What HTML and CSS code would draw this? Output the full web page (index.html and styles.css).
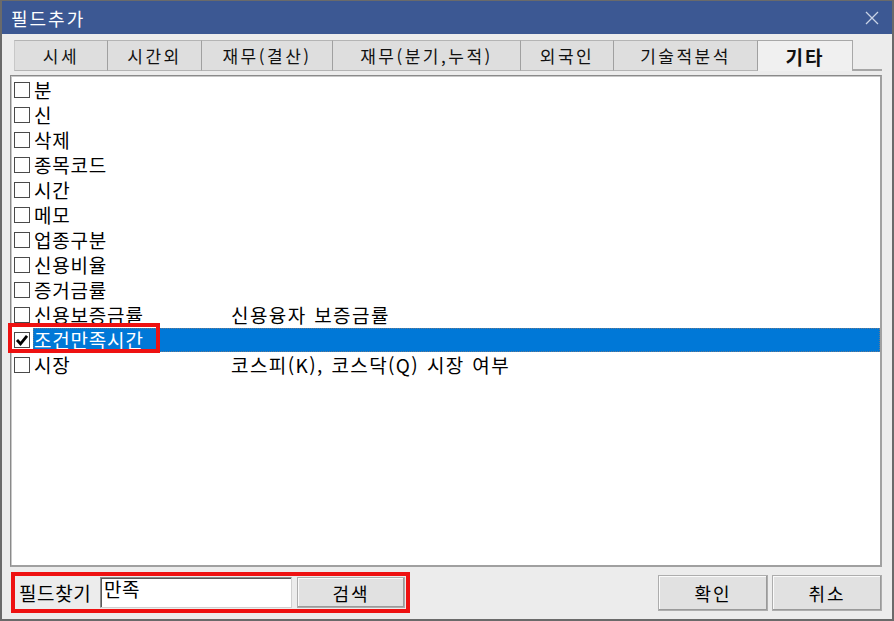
FILE: index.html
```html
<!DOCTYPE html>
<html lang="ko">
<head>
<meta charset="utf-8">
<link rel="stylesheet" href="styles.css">
</head>
<body>
<div class="window">
  <div class="titlebar">
    <span class="title">필드추가</span>
    <svg class="close" width="16" height="16" viewBox="0 0 16 16"><path d="M2 2 L14 14 M14 2 L2 14" stroke="#c9d3e6" stroke-width="1.3" fill="none"/></svg>
  </div>
  <div class="content">
    <div class="tabs">
      <div class="tab w1">시세</div>
      <div class="tab w2">시간외</div>
      <div class="tab w3">재무(결산)</div>
      <div class="tab w4">재무(분기,누적)</div>
      <div class="tab w5">외국인</div>
      <div class="tab w6">기술적분석</div>
      <div class="tab active w7">기타</div>
      <div class="tab-fill"></div>
    </div>
    <div class="list">
      <div class="row"><span class="cb"></span><span class="cell"><span class="name">분</span></span></div>
      <div class="row"><span class="cb"></span><span class="cell"><span class="name">신</span></span></div>
      <div class="row"><span class="cb"></span><span class="cell"><span class="name">삭제</span></span></div>
      <div class="row"><span class="cb"></span><span class="cell"><span class="name">종목코드</span></span></div>
      <div class="row"><span class="cb"></span><span class="cell"><span class="name">시간</span></span></div>
      <div class="row"><span class="cb"></span><span class="cell"><span class="name">메모</span></span></div>
      <div class="row"><span class="cb"></span><span class="cell"><span class="name">업종구분</span></span></div>
      <div class="row"><span class="cb"></span><span class="cell"><span class="name">신용비율</span></span></div>
      <div class="row"><span class="cb"></span><span class="cell"><span class="name">증거금률</span></span></div>
      <div class="row"><span class="cb"></span><span class="cell"><span class="name">신용보증금률</span><span class="desc">신용융자 보증금률</span></span></div>
      <div class="row selected">
        <span class="cb checked"><svg width="14" height="14" viewBox="0 0 14 14"><path d="M2 7 L5.5 10.8 L12 2.8" stroke="#000" stroke-width="2.8" fill="none" stroke-linejoin="miter"/></svg></span>
        <span class="cell"><span class="name">조건만족시간</span></span>
        <span class="mark"></span>
      </div>
      <div class="row"><span class="cb"></span><span class="cell"><span class="name">시장</span><span class="desc">코스피(K), 코스닥(Q) 시장 여부</span></span></div>
    </div>
    <div class="bottom">
      <div class="search">
        <span class="label">필드찾기</span>
        <div class="input">만족</div>
        <button class="btn search-btn">검색</button>
      </div>
      <div class="actions">
        <button class="btn act">확인</button>
        <button class="btn act">취소</button>
      </div>
    </div>
  </div>
</div>
</body>
</html>
```

FILE: styles.css
```css
html, body {
  margin: 0;
  padding: 0;
  background: #5a5a5a;
}
body {
  font-family: "Noto Sans CJK KR", "Noto Sans", sans-serif;
  color: #000;
}
.window {
  width: 894px;
  height: 621px;
  box-sizing: border-box;
  border: 2px solid #6a6a6a;
  border-top-width: 1px;
  background: #ececec;
  display: flex;
  flex-direction: column;
}
.titlebar {
  height: 33px;
  background: #3c5893;
  display: flex;
  align-items: center;
  justify-content: space-between;
  padding: 0 12px 0 9px;
  flex: none;
}
.title {
  color: #fff;
  font-size: 18px;
  letter-spacing: 2px;
  line-height: 1;
}
.close {
  display: block;
}
.content {
  flex: 1;
  display: flex;
  flex-direction: column;
  padding: 6px 8px 0 8px;
  min-height: 0;
}
.tabs {
  display: flex;
  height: 31px;
  margin-left: 4px;
  flex: none;
}
.tab {
  box-sizing: border-box;
  height: 31px;
  background: #dedede;
  border: 1px solid #b4b4b4;
  border-right-color: #a0a0a0;
  border-left: none;
  display: flex;
  align-items: center;
  justify-content: center;
  font-size: 17px;
  letter-spacing: 2.5px;
  color: #111;
}
.tab.w1 { width: 94px; border-left: 1px solid #c8c8c8; }
.tab.w2 { width: 94px; }
.tab.w3 { width: 131px; }
.tab.w4 { width: 188px; }
.tab.w5 { width: 93px; }
.tab.w6 { width: 144px; }
.tab.w7 { width: 95px; }
.tab.active {
  background: #f0f0f0;
  border: 1px solid #a8a8a8;
  border-bottom: none;
  border-left: none;
  font-weight: bold;
  font-size: 19px;
  letter-spacing: 2px;
}
.tab-fill {
  flex: none;
  width: 29px;
  border-bottom: 2px solid #a6a6a6;
  height: 31px;
  box-sizing: border-box;
}
.list {
  margin-top: 4px;
  height: 492px;
  width: 872px;
  box-sizing: border-box;
  background: #fff;
  border: 1px solid #8a8a8a;
  border-right: 2px solid #a0a0a0;
  border-bottom: 2px solid #a0a0a0;
  box-shadow: inset 1px 1px 0 #c8c8c8;
  padding: 1px 0 0 3px;
  display: flex;
  flex-direction: column;
  flex: none;
}
.row {
  position: relative;
  height: 25px;
  display: flex;
  align-items: center;
  flex: none;
}
.cb {
  box-sizing: border-box;
  width: 16px;
  height: 16px;
  border: 1px solid #4a4a4a;
  background: #fff;
  flex: none;
  display: flex;
  align-items: center;
  justify-content: center;
}
.cell {
  flex: 1;
  display: flex;
  align-items: center;
  height: 24px;
  margin-left: 3px;
  padding-left: 1px;
  font-size: 19px;
  line-height: 24px;
  letter-spacing: 0.8px;
  box-sizing: border-box;
}
.name {
  width: 197px;
  flex: none;
  white-space: nowrap;
}
.desc {
  white-space: nowrap;
  letter-spacing: 1.4px;
  word-spacing: 1px;
}
.row.selected .cell {
  background: #0078d7;
  color: #fff;
  outline: 1px dotted #6a7a8c;
  outline-offset: -1px;
}
.mark {
  position: absolute;
  left: -6px;
  top: -4px;
  width: 152px;
  height: 30px;
  box-sizing: border-box;
  border: 4px solid #ee1111;
  pointer-events: none;
}
.bottom {
  margin-top: 5px;
  display: flex;
  justify-content: space-between;
  align-items: flex-start;
  width: 872px;
  flex: none;
}
.search {
  margin-left: 1px;
  width: 399px;
  height: 41px;
  box-sizing: border-box;
  border: 4px solid #ee1111;
  display: flex;
  align-items: center;
  padding: 0 0 0 4px;
}
.label {
  font-size: 19px;
  letter-spacing: 0.6px;
  width: 81px;
  flex: none;
  white-space: nowrap;
}
.input {
  box-sizing: border-box;
  width: 192px;
  height: 31px;
  background: #fff;
  border: 1px solid #8c8c8c;
  border-right-color: #d0d0d0;
  border-bottom-color: #d0d0d0;
  box-shadow: inset 1px 1px 0 #5a5a5a;
  font-size: 19px;
  line-height: 22px;
  letter-spacing: 0.6px;
  padding: 0 0 0 3px;
  flex: none;
}
.btn {
  font-family: "Noto Sans CJK KR", "Noto Sans", sans-serif;
  font-size: 18px;
  letter-spacing: 2px;
  background: #e1e1e1;
  border: 1px solid #adadad;
  box-shadow: inset -1px -1px 0 #9a9a9a, inset 1px 1px 0 #fafafa;
  color: #000;
  padding: 0;
  margin: 0;
  box-sizing: border-box;
}
.search-btn {
  width: 108px;
  height: 31px;
  margin-left: 5px;
}
.actions {
  display: flex;
  gap: 4px;
  margin-top: 3px;
}
.act {
  width: 110px;
  height: 36px;
}
```
